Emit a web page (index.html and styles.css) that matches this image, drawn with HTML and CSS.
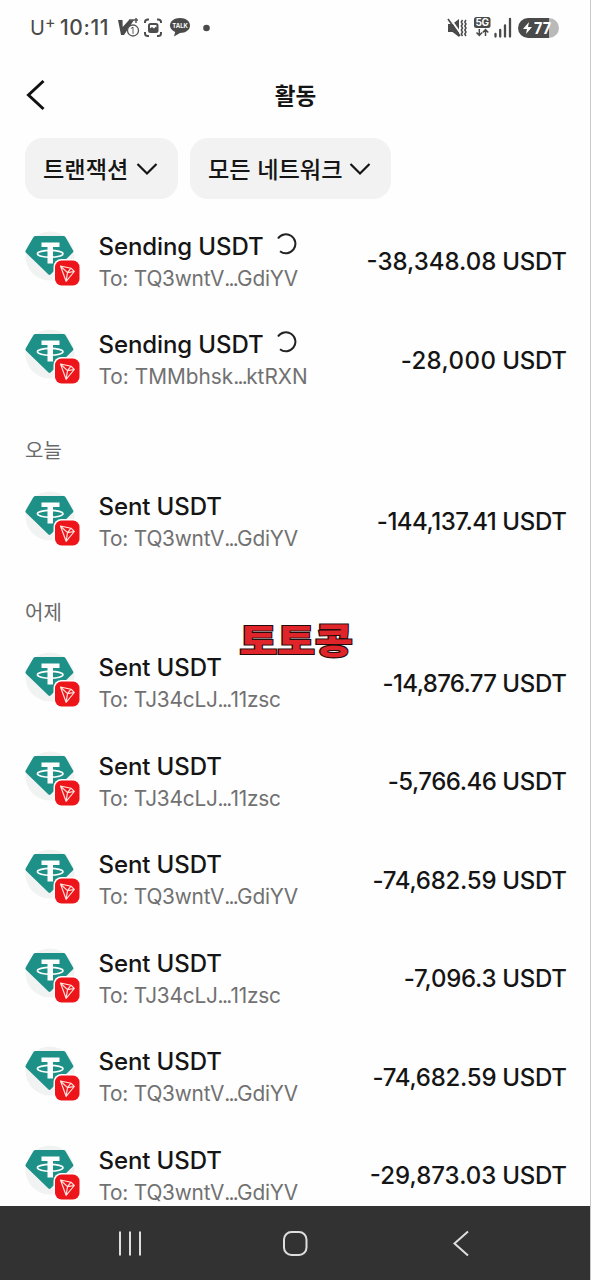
FILE: index.html
```html
<!DOCTYPE html>
<html lang="ko">
<head>
<meta charset="utf-8">
<title>활동</title>
<link rel="stylesheet" href="styles.css">
</head>
<body>
<svg class="defs" width="0" height="0" aria-hidden="true">
  <symbol id="token" viewBox="0 0 56 56">
    <circle cx="25" cy="25" r="24.5" fill="#f1f3f3"/>
    <path d="M10.500 5h28q1.200 0 1.900 1.100l7.700 13.300q.7 1.200-.3 2.200L25.500 43.500q-1 .9-2 0L1 21.700q-1-1-.3-2.200L8.500 6.100q.7-1.100 2-1.100z" fill="#1d9088"/>
    <path d="M16.500 11.500h18v4.500H28v16.500h-5.500V16h-6z" fill="#fff"/>
    <ellipse cx="25.200" cy="22.800" rx="12.800" ry="3.400" fill="none" stroke="#fff" stroke-width="1.600"/>
    <rect x="28.500" y="28" width="27" height="28" rx="8" fill="#fff"/>
    <rect x="30" y="29.500" width="24.500" height="25" rx="6.500" fill="#ee151a"/>
    <path d="M35.500 35l10.500 2.200 3.300 3.300-8.200 9.800zM35.500 35l7 6.600 3.500-4.400M49.300 40.500l-6.800 1.100-1.400 8.700" fill="none" stroke="#ffe5df" stroke-width="1.150" stroke-linejoin="round"/>
  </symbol>
  <symbol id="chevron" viewBox="0 0 22 14">
    <path d="M1.500 2l9.500 9.500L20.500 2" fill="none" stroke="#151515" stroke-width="2.200"/>
  </symbol>
  <symbol id="spinner" viewBox="0 0 22 22">
    <path d="M2 5.500A9.500 9.500 0 1 1 4 18.200" fill="none" stroke="#222" stroke-width="2"/>
  </symbol>
</svg>
<div class="screen">
  <header class="status">
    <span class="carrier">U<sup>+</sup></span>
    <span class="time">10:11</span>
    <svg class="s-left" width="98" height="24" viewBox="0 0 98 24">
      <path d="M1 4h4.500l.2 7L12 4h5L7 19H4z" fill="#4a4a4a"/>
      <path d="M12 4h9M19 2v5" stroke="#555" stroke-width="1.500"/>
      <circle cx="16" cy="14.500" r="5.500" fill="#fff" stroke="#555" stroke-width="1.300"/>
      <text x="13.600" y="18" class="tiny">1</text>
      <g fill="none" stroke="#4d4d4d" stroke-width="2"><path d="M28 7V6q0-2.500 3-2.500h1M40 3.500h1q3 0 3 2.500v1M28 16v1.500Q28 20 31 20h1M40 20h1q3 0 3-2.500V16"/><rect x="32" y="8" width="8.500" height="8" rx="1.500"/></g>
      <path d="M32 16v-3l3-2 2 1.500 2-2 1.500 2V16z" fill="#4d4d4d"/>
      <path d="M63 2c6 0 10 3.200 10 7.500S69 17 63 17l-6 3.500 1.200-4.500C55 14.600 53 12.500 53 9.500 53 5.200 57 2 63 2z" fill="#4a4a4a"/>
      <text x="55.300" y="12" class="talk" textLength="15.500" lengthAdjust="spacingAndGlyphs">TALK</text>
      <circle cx="89.500" cy="12" r="3.300" fill="#4a4a4a"/>
    </svg>
    <svg class="s-right" width="114" height="24" viewBox="0 0 114 24">
      <path d="M1 8h4.500L12 3v18l-6.500-5H1z" fill="#4a4a4a"/>
      <path d="M2 1l12 17" stroke="#fff" stroke-width="2"/><path d="M1 3l12 17" stroke="#4a4a4a" stroke-width="1.700"/>
      <path d="M15.500 4l-1.200 2 1.200 2-1.200 2 1.200 2-1.200 2 1.200 2-1.200 2 1.200 2M19 4l-1.200 2 1.200 2-1.200 2 1.200 2-1.200 2 1.200 2-1.200 2 1.200 2" fill="none" stroke="#4a4a4a" stroke-width="1.500"/>
      <rect x="27" y="1" width="16.500" height="11" rx="2.500" fill="#4a4a4a"/>
      <text x="28.500" y="10.300" class="fiveg" textLength="13.500">5G</text>
      <path d="M32.300 13v6M29.500 16.500l2.800 3 2.800-3M38.500 20v-6M35.700 16.500l2.800-3 2.800 3" fill="none" stroke="#4a4a4a" stroke-width="1.500"/>
      <path d="M48.500 18v2.500M53.200 14v6.500M58 9.500v11M63 3v17.500" stroke="#4a4a4a" stroke-width="2.300" stroke-linecap="round"/>
      <path d="M81 2h21v20H81A10 10 0 0 1 81 2z" fill="#4a4a4a"/>
      <path d="M102 2a10 10 0 0 1 0 20z" fill="#b9b9b9"/>
      <path d="M82 6l-6 7h4l-1 5 6-7h-4z" fill="#fff"/>
      <text x="87" y="17.500" class="batt" textLength="17" lengthAdjust="spacingAndGlyphs">77</text>
    </svg>
  </header>
  <div class="titlebar">
    <svg class="back" width="22" height="32" viewBox="0 0 22 32"><path d="M18.500 2L3.500 16l15 14" fill="none" stroke="#111" stroke-width="3"/></svg>
    <h1>활동</h1>
  </div>
  <div class="filters">
    <div class="chip chip-a"><span>트랜잭션</span><svg width="22" height="14"><use href="#chevron"/></svg></div>
    <div class="chip chip-b"><span>모든 네트워크</span><svg width="22" height="14"><use href="#chevron"/></svg></div>
  </div>
  <main class="list">
    <div class="row"><svg class="token"><use href="#token"/></svg><div class="info"><div class="name">Sending USDT<svg class="spin"><use href="#spinner"/></svg></div><div class="to">To: TQ3wntV<i>...</i>GdiYV</div></div><div class="amt"><b>-38,348.08</b> USDT</div></div>
    <div class="row"><svg class="token"><use href="#token"/></svg><div class="info"><div class="name">Sending USDT<svg class="spin"><use href="#spinner"/></svg></div><div class="to loose">To: TMMbhsk<i>...</i>ktRXN</div></div><div class="amt wide"><b>-28,000</b> USDT</div></div>
    <h2>오늘</h2>
    <div class="row"><svg class="token"><use href="#token"/></svg><div class="info"><div class="name">Sent USDT</div><div class="to">To: TQ3wntV<i>...</i>GdiYV</div></div><div class="amt tight"><b>-144,137.41</b> USDT</div></div>
    <h2>어제</h2>
    <div class="row"><svg class="token"><use href="#token"/></svg><div class="info"><div class="name">Sent USDT</div><div class="to">To: TJ34cLJ<i>...</i>11zsc</div></div><div class="amt tighter"><b>-14,876.77</b> USDT</div></div>
    <div class="row"><svg class="token"><use href="#token"/></svg><div class="info"><div class="name">Sent USDT</div><div class="to">To: TJ34cLJ<i>...</i>11zsc</div></div><div class="amt tight"><b>-5,766.46</b> USDT</div></div>
    <div class="row"><svg class="token"><use href="#token"/></svg><div class="info"><div class="name">Sent USDT</div><div class="to">To: TQ3wntV<i>...</i>GdiYV</div></div><div class="amt snug"><b>-74,682.59</b> USDT</div></div>
    <div class="row"><svg class="token"><use href="#token"/></svg><div class="info"><div class="name">Sent USDT</div><div class="to">To: TJ34cLJ<i>...</i>11zsc</div></div><div class="amt snug"><b>-7,096.3</b> USDT</div></div>
    <div class="row"><svg class="token"><use href="#token"/></svg><div class="info"><div class="name">Sent USDT</div><div class="to">To: TQ3wntV<i>...</i>GdiYV</div></div><div class="amt snug"><b>-74,682.59</b> USDT</div></div>
    <div class="row"><svg class="token"><use href="#token"/></svg><div class="info"><div class="name">Sent USDT</div><div class="to">To: TQ3wntV<i>...</i>GdiYV</div></div><div class="amt"><b>-29,873.03</b> USDT</div></div>
  </main>
  <nav class="nav">
    <svg width="591" height="74" viewBox="0 0 591 74" fill="none" stroke="#dedede" stroke-width="2">
      <path d="M120 25.500v24M130 25.500v24M140 25.500v24"/>
      <rect x="284" y="26" width="22.500" height="23" rx="7.500"/>
      <path d="M468 25.500L454.500 37.500l13.500 12"/>
    </svg>
  </nav>
  <div class="stamp">토토콩</div>
</div>
</body>
</html>
```

FILE: styles.css
```css
* { box-sizing: border-box; }
body { margin: 0; background: #fff; font-family: Inter, "Noto Sans CJK KR", sans-serif; color: #151515; }
.defs { position: absolute; }
.screen { position: relative; width: 591px; height: 1280px; overflow: hidden; display: flex; flex-direction: column; border-right: 1px solid #c9c9c9; background: #fefefe; }
.status { height: 56px; flex: none; display: flex; align-items: center; padding: 0 29px 0 30px; color: #4a4a4a; }
.carrier { width: 30px; font: 20px/24px Inter, sans-serif; }
.carrier sup { font-size: 16px; line-height: 0; vertical-align: 7px; }
.time { width: 57px; font: 500 21px/24px Inter, sans-serif; letter-spacing: .6px; white-space: nowrap; }
.s-right { margin-left: auto; }
.tiny { font: 9px Inter, sans-serif; fill: #444; }
.talk { font: 700 6.500px Inter, sans-serif; fill: #fff; }
.fiveg { font: 700 10px Inter, sans-serif; fill: #fff; }
.batt { font: 700 16px Inter, sans-serif; fill: #fff; }
.titlebar { height: 82px; flex: none; display: grid; grid-template-columns: 60px 1fr 60px; align-items: center; padding: 0 0 4px; }
.back { margin-left: 25px; }
h1 { margin: 0; padding: 0 0 3px 1px; text-align: center; font: 700 22.500px/30px "Noto Sans CJK KR", sans-serif; }
.filters { height: 61px; flex: none; display: flex; gap: 12px; padding-left: 25px; }
.chip { display: flex; align-items: center; justify-content: space-between; border-radius: 18px; background: #f2f2f2; padding: 0 20px 0 18px; font: 500 23.200px/34px "Noto Sans CJK KR", sans-serif; white-space: nowrap; }
.chip span { padding-bottom: 2px; }
.chip-a { width: 153px; }
.chip-b { width: 201px; }
.list { flex: 1; min-height: 0; overflow: hidden; padding: 14px 24px 0 25px; }
.row { height: 98.500px; display: flex; align-items: center; }
.token { width: 56px; height: 56px; flex: none; margin: 0 17.500px 7px 0; }
.info { flex: 1; padding-top: 1px; }
.name { font-size: 24px; line-height: 32px; font-weight: 500; letter-spacing: -.1px; white-space: nowrap; }
.spin { width: 22px; height: 22px; margin-left: 13px; }
.to { font-size: 20.800px; line-height: 32px; letter-spacing: -.2px; color: #717171; white-space: nowrap; }
.to i { font-style: normal; letter-spacing: -1.700px; }
.loose { letter-spacing: .02px; }
.amt { font-size: 24px; line-height: 32px; font-weight: 460; letter-spacing: -.35px; white-space: nowrap; margin-right: -.5px; }
.amt b { font-weight: inherit; letter-spacing: 0; }
.wide b { letter-spacing: .400px; }
.snug b { letter-spacing: -.250px; }
.tight b { letter-spacing: -.500px; }
.tighter b { letter-spacing: -.650px; }
h2 { height: 63px; margin: 0; padding-top: 23px; font: 400 20px/33px "Noto Sans CJK KR", sans-serif; color: #686868; }
.nav { height: 74px; flex: none; background: #323232; }
.stamp { position: absolute; left: 239.500px; top: 612px; font: 900 41px/54px "Noto Sans CJK KR", sans-serif; color: #df2529; -webkit-text-stroke: 2.500px #250c0c; paint-order: stroke fill; white-space: nowrap; transform: scaleY(.86); }
```
